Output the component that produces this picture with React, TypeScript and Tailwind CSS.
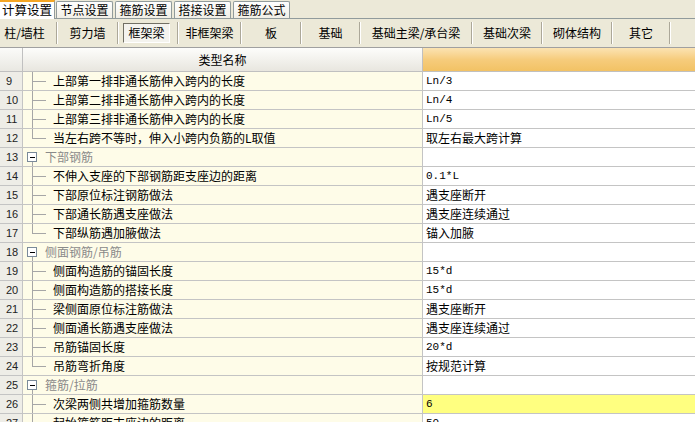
import React from "react";

type Row = { n: number; t: string; v?: string; kind: "child" | "last" | "group"; hl?: boolean };

const rows: Row[] = [
  { n: 9, t: "上部第一排非通长筋伸入跨内的长度", v: "Ln/3", kind: "child" },
  { n: 10, t: "上部第二排非通长筋伸入跨内的长度", v: "Ln/4", kind: "child" },
  { n: 11, t: "上部第三排非通长筋伸入跨内的长度", v: "Ln/5", kind: "child" },
  { n: 12, t: "当左右跨不等时，伸入小跨内负筋的L取值", v: "取左右最大跨计算", kind: "last" },
  { n: 13, t: "下部钢筋", kind: "group" },
  { n: 14, t: "不伸入支座的下部钢筋距支座边的距离", v: "0.1*L", kind: "child" },
  { n: 15, t: "下部原位标注钢筋做法", v: "遇支座断开", kind: "child" },
  { n: 16, t: "下部通长筋遇支座做法", v: "遇支座连续通过", kind: "child" },
  { n: 17, t: "下部纵筋遇加腋做法", v: "锚入加腋", kind: "last" },
  { n: 18, t: "侧面钢筋/吊筋", kind: "group" },
  { n: 19, t: "侧面构造筋的锚固长度", v: "15*d", kind: "child" },
  { n: 20, t: "侧面构造筋的搭接长度", v: "15*d", kind: "child" },
  { n: 21, t: "梁侧面原位标注筋做法", v: "遇支座断开", kind: "child" },
  { n: 22, t: "侧面通长筋遇支座做法", v: "遇支座连续通过", kind: "child" },
  { n: 23, t: "吊筋锚固长度", v: "20*d", kind: "child" },
  { n: 24, t: "吊筋弯折角度", v: "按规范计算", kind: "last" },
  { n: 25, t: "箍筋/拉筋", kind: "group" },
  { n: 26, t: "次梁两侧共增加箍筋数量", v: "6", kind: "child", hl: true },
  { n: 27, t: "起始箍筋距支座边的距离", v: "50", kind: "child" },
];

const tabs = ["节点设置", "箍筋设置", "搭接设置", "箍筋公式"];

const tools: { label: string; w: string; pressed?: boolean; first?: boolean }[] = [
  { label: "柱/墙柱", w: "w-[56px]", first: true },
  { label: "剪力墙", w: "w-[59px]" },
  { label: "框架梁", w: "w-[58px]", pressed: true },
  { label: "非框架梁", w: "w-[61px]" },
  { label: "板", w: "w-[58px]" },
  { label: "基础", w: "w-[57px]" },
  { label: "基础主梁/承台梁", w: "w-[110px]" },
  { label: "基础次梁", w: "w-[68px]" },
  { label: "砌体结构", w: "w-[68px]" },
  { label: "其它", w: "w-[56px]" },
];

const cjk = "font-['SimSun','Noto_Sans_CJK_SC',sans-serif]";
const hasCjk = (s: string) => /[\u4e00-\u9fff]/.test(s);

function ChildLine({ last }: { last: boolean }) {
  return (
    <svg width="28" height="18" className="shrink-0" shapeRendering="crispEdges">
      <line x1="9.5" y1="0" x2="9.5" y2={last ? 9.5 : 18} stroke="#a6a6a6" />
      <line x1="9.5" y1="9.5" x2="23" y2="9.5" stroke="#a6a6a6" />
    </svg>
  );
}

function GroupBox() {
  return (
    <svg width="20" height="18" className="shrink-0" shapeRendering="crispEdges">
      <rect x="4.5" y="4.5" width="9" height="9" fill="#ffffff" stroke="#7a8a99" />
      <line x1="6.5" y1="9.5" x2="12" y2="9.5" stroke="#000000" />
      <line x1="9.5" y1="14" x2="9.5" y2="18" stroke="#a6a6a6" />
    </svg>
  );
}

export default function App() {
  return (
    <div className={`w-[695px] h-[422px] overflow-hidden bg-[#ece9d8] text-[12px] text-black ${cjk}`}>
      {/* Tabs */}
      <div className="h-[19px] flex items-end border-b border-[#919b9c] relative">
        <div className="h-[19px] w-[55px] bg-white border-t-2 border-[#f5a623] border-r border-r-[#919b9c] flex items-center justify-center leading-none text-[12.5px] -mb-px">
          计算设置
        </div>
        <div className="flex items-end gap-[2px] ml-[1px]">
          {tabs.map((t) => (
            <div
              key={t}
              className="h-[17px] w-[57px] border border-b-0 border-[#919b9c] bg-gradient-to-b from-[#fefefe] to-[#f1efe6] flex items-center justify-center leading-none rounded-t-[2px]"
            >
              {t}
            </div>
          ))}
        </div>
      </div>

      {/* Toolbar */}
      <div className="h-[29px] flex items-center border-b border-[#a0a0a0] bg-[#ece9d8]">
        {tools.map((b) => (
          <React.Fragment key={b.label}>
            <div className={`${b.w} h-[28px] flex items-center justify-center ${b.first ? "pr-[7px]" : ""}`}>
              {b.pressed ? (
                <div className="ml-[-3px] w-[47px] h-[20px] flex items-center justify-center border border-t-[#716f64] border-l-[#716f64] border-r-white border-b-white bg-[#f4f3ee]">
                  {b.label}
                </div>
              ) : (
                <span>{b.label}</span>
              )}
            </div>
            <div className="w-[2px] h-[22px] flex shrink-0">
              <div className="w-px h-full bg-[#aca899]" />
              <div className="w-px h-full bg-white" />
            </div>
          </React.Fragment>
        ))}
      </div>

      {/* Header */}
      <div className="h-[24px] flex border-b border-[#c0c0c0]">
        <div className="w-[23px] shrink-0 border-r border-[#c0c0c0] bg-gradient-to-b from-[#fbfbf9] to-[#e9e8e2]" />
        <div className="w-[400px] shrink-0 border-r border-[#c0c0c0] bg-gradient-to-b from-[#fdfdfb] to-[#e8e6df] flex items-center justify-center">
          类型名称
        </div>
        <div className="flex-1 bg-gradient-to-b from-[#fbe3b2] via-[#f6cc7c] to-[#f2c264]" />
      </div>

      {/* Rows */}
      {rows.map((r) => (
        <div key={r.n} className="h-[19px] flex border-b border-[#c4c4c4]">
          <div className="w-[23px] shrink-0 border-r border-[#c4c4c4] bg-[#eeede7] pl-[6px] flex items-center font-['Liberation_Sans',sans-serif] text-[11px] text-[#222]">
            {r.n}
          </div>
          <div className="w-[400px] shrink-0 border-r border-[#c4c4c4] bg-[#fefce8] flex items-center">
            {r.kind === "group" ? (
              <>
                <GroupBox />
                <span className="ml-[2px] text-[#8a8a8a] whitespace-nowrap">{r.t}</span>
              </>
            ) : (
              <>
                <ChildLine last={r.kind === "last"} />
                <span className="ml-[2px] whitespace-nowrap">{r.t}</span>
              </>
            )}
          </div>
          <div className={`flex-1 flex items-center pl-[3px] ${r.hl ? "bg-[#ffff80]" : "bg-white"}`}>
            {r.v ? (
              hasCjk(r.v) ? (
                <span className="whitespace-nowrap">{r.v}</span>
              ) : (
                <span className="font-['Liberation_Mono',monospace] text-[11px] whitespace-nowrap">{r.v}</span>
              )
            ) : null}
          </div>
        </div>
      ))}
    </div>
  );
}
